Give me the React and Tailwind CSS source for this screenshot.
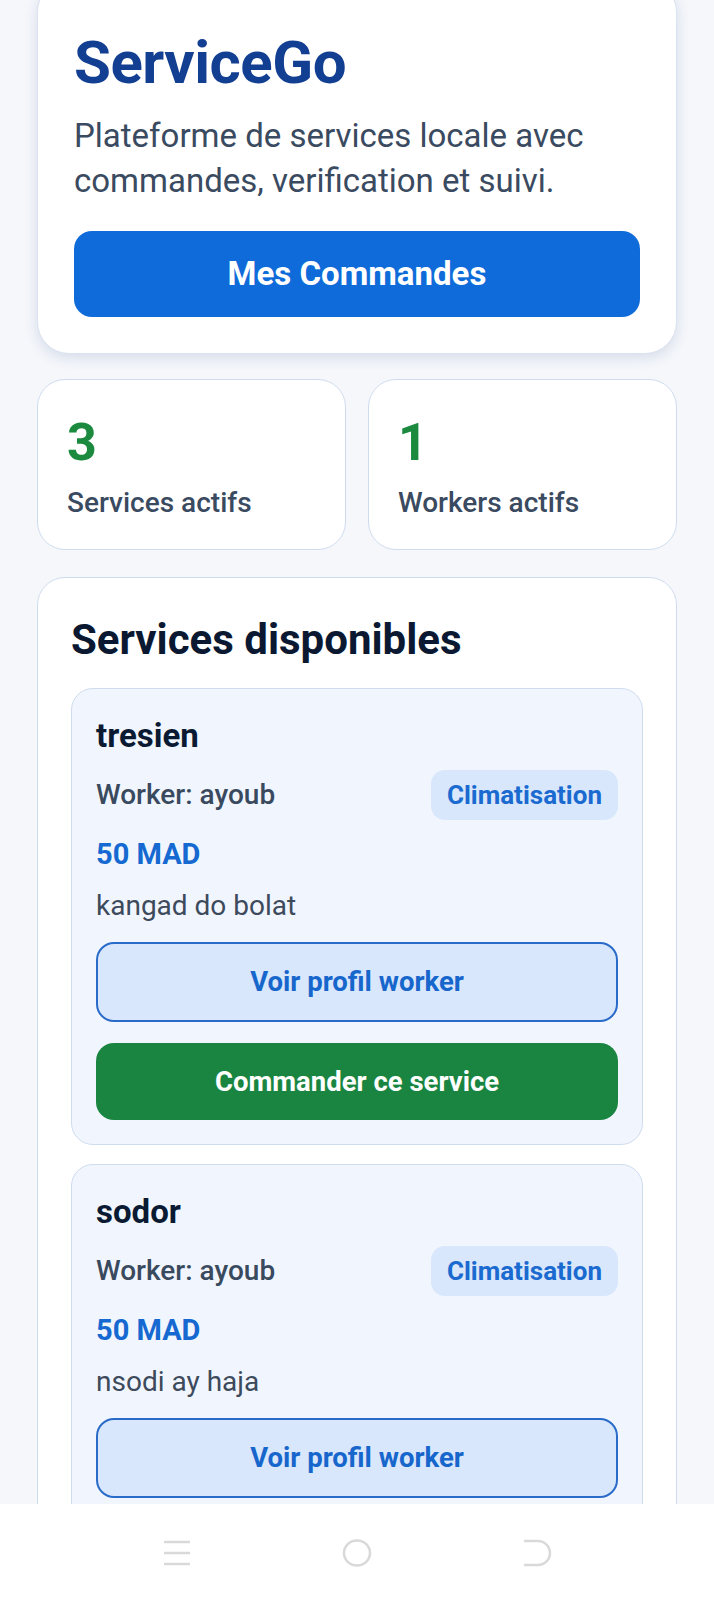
import React from "react";

function ServiceItem({ title, worker, category, price, desc, showOrder }) {
  return (
    <div className="rounded-[22px] border-[1.5px] border-[#cfdcef] bg-[#f1f6fe] px-[24px] pt-[29px] pb-[24px]">
      <div className="text-[33px] leading-[36px] font-bold text-[#0b1a33]">{title}</div>
      <div className="mt-[16px] flex items-center justify-between">
        <div className="text-[28px] leading-[36px] font-medium text-[#3a4a5e]">Worker: {worker}</div>
        <div className="h-[50px] px-[16px] rounded-[14px] bg-[#d8e7fc] flex items-center text-[26px] font-bold text-[#1a6ad0]">{category}</div>
      </div>
      <div className="mt-[16px] text-[29px] leading-[36px] font-bold text-[#1669d1]">{price}</div>
      <div className="mt-[16px] text-[28px] leading-[36px] text-[#3d4a5c]">{desc}</div>
      <div className="mt-[18px] h-[80px] rounded-[18px] border-2 border-[#2a6bc9] bg-[#d8e7fc] flex items-center justify-center text-[27.5px] font-bold text-[#1766cc]">
        Voir profil worker
      </div>
      {showOrder && (
        <div className="mt-[21px] h-[77px] rounded-[18px] bg-[#1a8540] flex items-center justify-center text-[27.5px] font-bold text-white">
          Commander ce service
        </div>
      )}
    </div>
  );
}

export default function App() {
  return (
    <div className="w-full h-[1599px] bg-[#f5f7fb] overflow-hidden flex flex-col" style={{ fontFamily: "Roboto, 'Noto Sans', sans-serif" }}>
      <div className="h-[1504px] overflow-hidden px-[37px] shrink-0">
        <div className="-mt-[20px] rounded-[32px] bg-white border border-[#dbe3f0] shadow-[0_4px_14px_rgba(30,60,120,0.14)] px-[36px] pt-[50px] pb-[36px]">
          <div className="text-[60px] leading-[64px] font-bold text-[#123f91] tracking-[-0.5px]">ServiceGo</div>
          <div className="mt-[18px] text-[33px] leading-[45px] text-[#3a4a60]">
            Plateforme de services locale avec commandes, verification et suivi.
          </div>
          <div className="mt-[28px] h-[86px] rounded-[18px] bg-[#0e6bd9] flex items-center justify-center text-[33px] font-bold text-white">
            Mes Commandes
          </div>
        </div>

        <div className="mt-[25px] grid grid-cols-2 gap-[22px]">
          <div className="rounded-[28px] border-[1.5px] border-[#cfdcef] bg-white pl-[29px] pt-[33px] pb-[28px]">
            <div className="text-[52px] leading-[60px] font-bold text-[#1b8a3f]">3</div>
            <div className="mt-[12px] text-[28px] leading-[36px] font-medium text-[#3a4a60]">Services actifs</div>
          </div>
          <div className="rounded-[28px] border-[1.5px] border-[#cfdcef] bg-white pl-[29px] pt-[33px] pb-[28px]">
            <div className="text-[52px] leading-[60px] font-bold text-[#1b8a3f]">1</div>
            <div className="mt-[12px] text-[28px] leading-[36px] font-medium text-[#3a4a60]">Workers actifs</div>
          </div>
        </div>

        <div className="mt-[27px] rounded-[28px] border-[1.5px] border-[#cfdcef] bg-white px-[33px] pt-[38px] pb-[30px]">
          <div className="text-[42px] leading-[48px] font-bold text-[#0a1931]">Services disponibles</div>
          <div className="mt-[24px] flex flex-col gap-[19px]">
            <ServiceItem title="tresien" worker="ayoub" category="Climatisation" price="50 MAD" desc="kangad do bolat" showOrder />
            <ServiceItem title="sodor" worker="ayoub" category="Climatisation" price="50 MAD" desc="nsodi ay haja" showOrder />
          </div>
        </div>
      </div>

      <div className="flex-1 bg-white flex items-center justify-center gap-[149px] pt-[3px]">
        <svg width="30" height="28" viewBox="0 0 30 28" fill="none" stroke="#d9d9d9" strokeWidth="2.5">
          <line x1="2" y1="3" x2="28" y2="3" />
          <line x1="2" y1="14" x2="28" y2="14" />
          <line x1="2" y1="25" x2="28" y2="25" />
        </svg>
        <svg width="32" height="30" viewBox="0 0 32 30" fill="none" stroke="#d9d9d9" strokeWidth="2.5">
          <ellipse cx="16" cy="15" rx="13" ry="12.5" />
        </svg>
        <svg width="30" height="30" viewBox="0 0 30 30" fill="none" stroke="#d9d9d9" strokeWidth="2.5" strokeLinecap="round">
          <path d="M3 3 H16 A11.5 11.5 0 0 1 16 27 H3" />
        </svg>
      </div>
    </div>
  );
}
